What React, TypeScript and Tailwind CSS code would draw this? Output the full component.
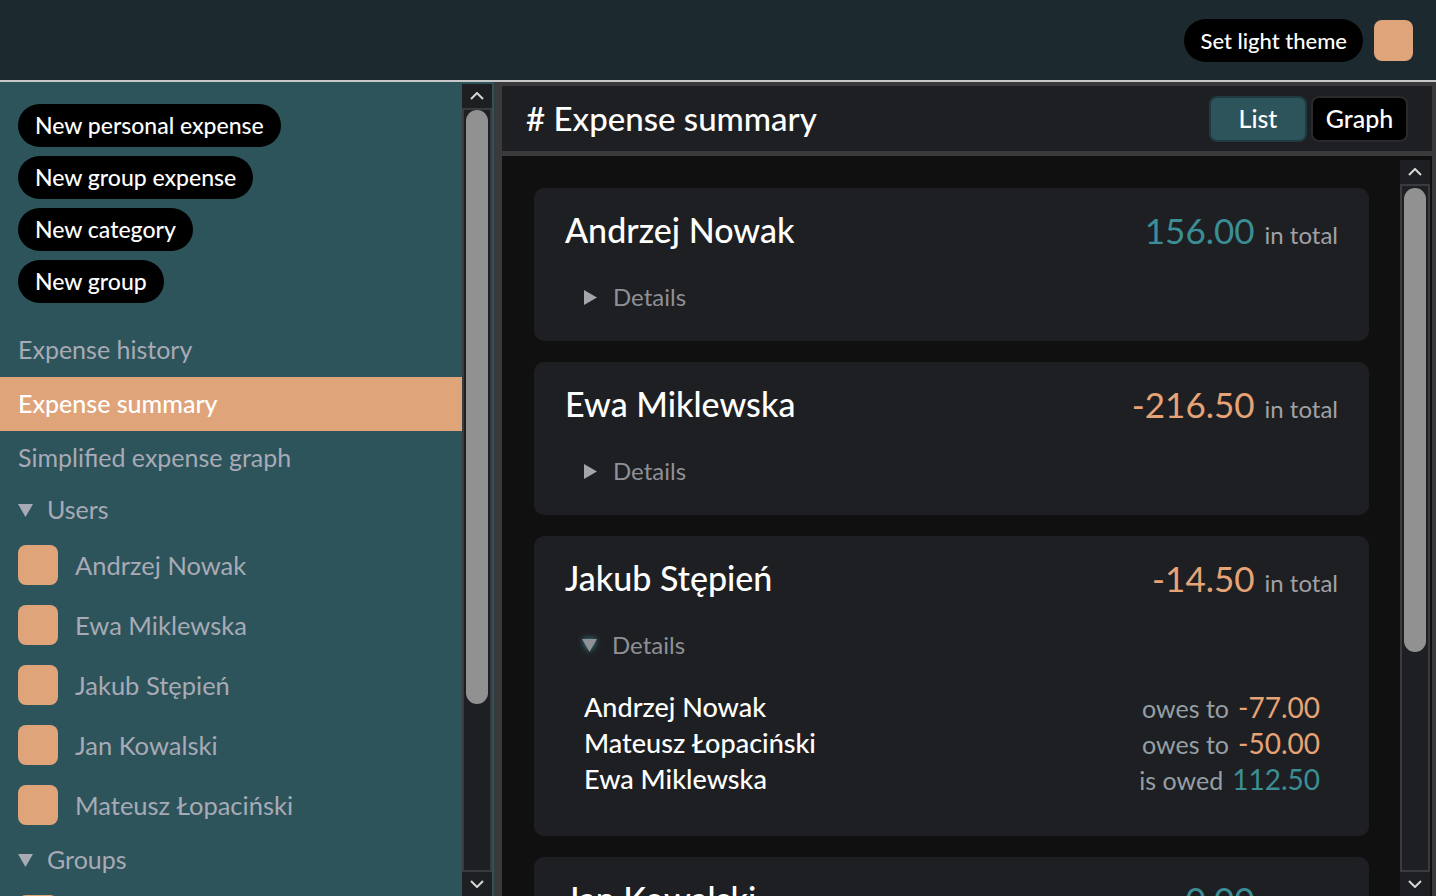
import React from "react";

function Chevron({ dir }: { dir: "up" | "down" }) {
  return (
    <svg width="14" height="8" viewBox="0 0 14 8">
      <polyline
        points={dir === "up" ? "1,7 7,1 13,7" : "1,1 7,7 13,1"}
        fill="none"
        stroke="#d6d6d6"
        strokeWidth="2"
      />
    </svg>
  );
}

function Scrollbar({ thumbTop, thumbHeight }: { thumbTop: number; thumbHeight: number }) {
  return (
    <div className="flex w-[30px] shrink-0 flex-col bg-[#1e1f22]">
      <div className="flex h-[24px] items-center justify-center">
        <Chevron dir="up" />
      </div>
      <div className="flex flex-1 flex-col border-2 border-[#3a3b3e] px-[2px]">
        <div style={{ height: thumbTop }} />
        <div className="rounded-t-full rounded-b-full bg-[#919191]" style={{ height: thumbHeight }} />
      </div>
      <div className="flex h-[24px] items-center justify-center">
        <Chevron dir="down" />
      </div>
    </div>
  );
}

function TriangleDown({ className }: { className?: string }) {
  return (
    <svg width="15" height="13" viewBox="0 0 15 13" className={className}>
      <polygon points="0,0 15,0 7.5,13" fill="currentColor" />
    </svg>
  );
}

function TriangleRight() {
  return (
    <svg width="13" height="15" viewBox="0 0 13 15">
      <polygon points="0,0 13,7.5 0,15" fill="#a3a4ac" />
    </svg>
  );
}

const users = ["Andrzej Nowak", "Ewa Miklewska", "Jakub Stępień", "Jan Kowalski", "Mateusz Łopaciński"];

type Row = { name: string; label: string; amount: string; positive: boolean };

function Card({
  name,
  amount,
  positive,
  open,
  rows,
}: {
  name: string;
  amount: string;
  positive: boolean;
  open?: boolean;
  rows?: Row[];
}) {
  return (
    <div className="shrink-0 rounded-[10px] bg-[#1e1f22] px-[31px] pb-[28px] pt-[20px]">
      <div className="flex h-[44px] items-center justify-between">
        <div className="text-[34px] font-medium leading-[44px] text-white">{name}</div>
        <div className="flex items-baseline gap-[10px]">
          <span className={positive ? "text-[35px] text-[#3b8e95]" : "text-[35px] text-[#e6a476]"}>{amount}</span>
          <span className="text-[24px] text-[#a0a1a6]">in total</span>
        </div>
      </div>
      <div className="mt-[29px] flex h-[32px] items-center pl-[19px]">
        {open ? (
          <TriangleDown className="-ml-[2px] mr-[15px] text-[#8f9197] drop-shadow-[0_0_3px_#3b8e95]" />
        ) : (
          <span className="mr-[16px] flex">
            <TriangleRight />
          </span>
        )}
        <span className="text-[24px] leading-[32px] text-[#8f9095]">Details</span>
      </div>
      {open && rows && (
        <div className="mb-[11px] mt-[28px] flex flex-col pl-[19px] pr-[18px]">
          {rows.map((r) => (
            <div key={r.name} className="flex h-[36px] items-center justify-between">
              <span className="text-[27px] font-medium text-white">{r.name}</span>
              <span className="flex items-baseline gap-[9px]">
                <span className="text-[25px] text-[#959fa5]">{r.label}</span>
                <span className={r.positive ? "text-[28px] text-[#3b8e95]" : "text-[28px] text-[#e6a476]"}>
                  {r.amount}
                </span>
              </span>
            </div>
          ))}
        </div>
      )}
    </div>
  );
}

export default function App() {
  return (
    <div className="flex h-[896px] w-[1436px] flex-col overflow-hidden bg-[#3a3a3c] font-['Lato',sans-serif]">
      {/* top header */}
      <div className="flex h-[82px] shrink-0 items-center justify-end gap-[11px] border-b-2 border-[#c8c8c8] bg-[#1c2a30] pr-[23px]">
        <button className="flex h-[43px] items-center rounded-full bg-black px-[16px] text-[22px] font-medium text-white">
          Set light theme
        </button>
        <div className="h-[41px] w-[39px] rounded-[8px] bg-[#e0a47a]" />
      </div>

      <div className="flex min-h-0 flex-1">
        {/* sidebar */}
        <div className="flex w-[494px] shrink-0 bg-[#2d545b] pr-[2px]">
          <div className="flex min-w-0 flex-1 flex-col overflow-hidden pt-[22px]">
            <div className="flex flex-col items-start gap-[9px] pl-[18px]">
              {["New personal expense", "New group expense", "New category", "New group"].map((t) => (
                <button
                  key={t}
                  className="flex h-[43px] items-center rounded-full bg-black px-[17px] text-[23px] font-medium text-white"
                >
                  {t}
                </button>
              ))}
            </div>
            <div className="mt-[20px] flex flex-col">
              <div className="flex h-[54px] items-center px-[18px] text-[25px] text-[#a8aab6]">Expense history</div>
              <div className="flex h-[54px] items-center bg-[#e0a47a] px-[18px] text-[25px] font-medium text-white">
                Expense summary
              </div>
              <div className="flex h-[54px] items-center px-[18px] text-[25px] text-[#a8aab6]">
                Simplified expense graph
              </div>
              <div className="flex h-[50px] items-center gap-[14px] px-[18px] text-[25px] text-[#a8aab6]">
                <TriangleDown className="text-[#a8aab6]" />
                <span>Users</span>
              </div>
              {users.map((u) => (
                <div key={u} className="flex h-[60px] shrink-0 items-center gap-[17px] px-[18px]">
                  <div className="h-[40px] w-[40px] shrink-0 rounded-[8px] bg-[#e0a47a]" />
                  <span className="text-[25.5px] text-[#a8aab6]">{u}</span>
                </div>
              ))}
              <div className="flex h-[50px] shrink-0 items-center gap-[14px] px-[18px] text-[25px] text-[#a8aab6]">
                <TriangleDown className="text-[#a8aab6]" />
                <span>Groups</span>
              </div>
              <div className="flex h-[60px] shrink-0 items-center px-[18px]">
                <div className="h-[40px] w-[40px] shrink-0 rounded-[8px] bg-[#e0a47a]" />
              </div>
            </div>
          </div>
          <div className="mt-[2px] flex">
            <Scrollbar thumbTop={0} thumbHeight={594} />
          </div>
        </div>

        {/* main panel */}
        <div className="ml-[8px] mr-[4px] mt-[4px] flex min-w-0 flex-1 flex-col">
          <div className="flex h-[70px] shrink-0 items-center justify-between border-b-[5px] border-[#3a3a3c] bg-[#1e1f22] pl-[24px] pr-[24px]">
            <div className="text-[33px] font-medium text-white">
              # Expense summary
            </div>
            <div className="flex gap-[4px]">
              <button className="flex h-[46px] w-[98px] items-center justify-center rounded-[8px] border-2 border-[#1f3a40] bg-[#2d545b] text-[25px] font-medium text-white">
                List
              </button>
              <button className="flex h-[46px] w-[97px] items-center justify-center rounded-[8px] border-2 border-[#2a2a2d] bg-black text-[25px] font-medium text-white">
                Graph
              </button>
            </div>
          </div>
          <div className="flex min-h-0 flex-1 bg-[#101011]">
            <div className="flex min-w-0 flex-1 flex-col gap-[21px] overflow-hidden pl-[32px] pr-[31px] pt-[32px]">
              <Card name="Andrzej Nowak" amount="156.00" positive />
              <Card name="Ewa Miklewska" amount="-216.50" positive={false} />
              <Card
                name="Jakub Stępień"
                amount="-14.50"
                positive={false}
                open
                rows={[
                  { name: "Andrzej Nowak", label: "owes to", amount: "-77.00", positive: false },
                  { name: "Mateusz Łopaciński", label: "owes to", amount: "-50.00", positive: false },
                  { name: "Ewa Miklewska", label: "is owed", amount: "112.50", positive: true },
                ]}
              />
              <Card name="Jan Kowalski" amount="0.00" positive />
            </div>
            <div className="mr-[2px] mt-[4px] flex">
              <Scrollbar thumbTop={2} thumbHeight={464} />
            </div>
          </div>
        </div>
      </div>
    </div>
  );
}
